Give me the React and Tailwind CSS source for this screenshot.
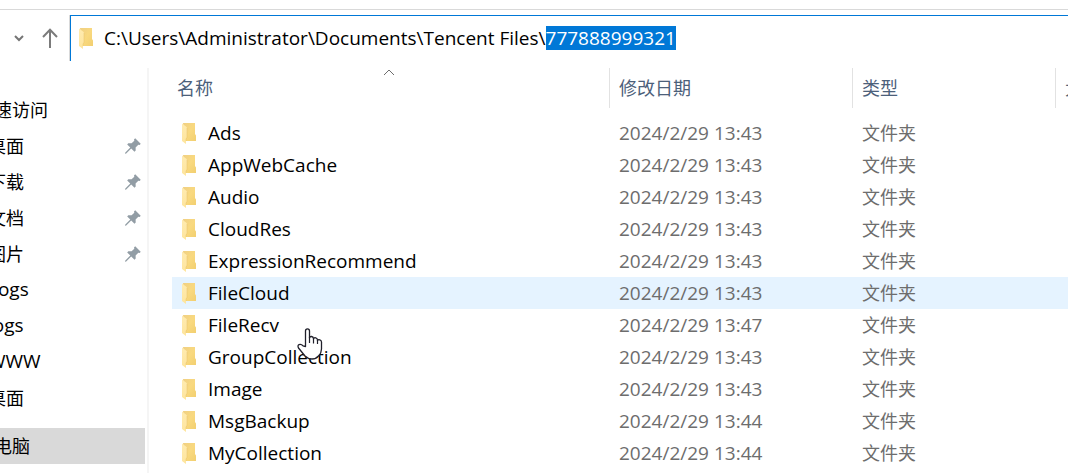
import { useEffect, useRef } from "react";

const PARENT = "C:\\Users\\Administrator\\Documents\\Tencent Files\\";
const CURRENT = "777888999321";

const files = [
  ["Ads", "2024/2/29 13:43"],
  ["AppWebCache", "2024/2/29 13:43"],
  ["Audio", "2024/2/29 13:43"],
  ["CloudRes", "2024/2/29 13:43"],
  ["ExpressionRecommend", "2024/2/29 13:43"],
  ["FileCloud", "2024/2/29 13:43"],
  ["FileRecv", "2024/2/29 13:47"],
  ["GroupCollection", "2024/2/29 13:43"],
  ["Image", "2024/2/29 13:43"],
  ["MsgBackup", "2024/2/29 13:44"],
  ["MyCollection", "2024/2/29 13:44"],
];

const places = [
  { name: "桌面", pinned: true },
  { name: "下载", pinned: true },
  { name: "文档", pinned: true },
  { name: "图片", pinned: true },
  { name: "Logs", latin: true },
  { name: "logs", latin: true },
  { name: "WWW", latin: true },
  { name: "桌面" },
];

function FolderIcon() {
  return (
    <svg className="h-[22px] w-[14px] shrink-0" viewBox="0 -1 14 22" aria-hidden="true">
      <defs>
        <linearGradient id="folder-back" x1="0" y1="0" x2="1" y2="1">
          <stop offset="0" stopColor="#f0d084" />
          <stop offset="0.5" stopColor="#f9d97f" />
          <stop offset="1" stopColor="#f2cf70" />
        </linearGradient>
        <linearGradient id="folder-front" x1="0" y1="0" x2="0" y2="1">
          <stop offset="0" stopColor="#ffebb0" />
          <stop offset="1" stopColor="#fee59d" />
        </linearGradient>
      </defs>
      <path d="M1 0H13V11L14 12.5V18H3Z" fill="url(#folder-back)" />
      <path d="M0 0.5L4 3.5Q5 4 5 5.500V14L4 15.500V21L0 18Z" fill="url(#folder-front)" />
      <path d="M5 5V14.500L4 16V18" fill="none" stroke="#e6c36f" strokeWidth="0.5" />
    </svg>
  );
}

function PinIcon() {
  return (
    <svg className="h-4 w-4 shrink-0" viewBox="0 0 16 16" aria-hidden="true">
      <path
        d="M10.200 0.300L15.700 5.800L14.700 7L13.300 6.800L10.600 9.500L10.700 12.600L9.500 13.700L6.200 10.500L1.200 15.500L0 15.700L0.300 14.500L5.300 9.600L2.200 6.400L3.300 5.200L6.600 5.300L9.300 2.700L9 1.400Z"
        fill="#929da5"
      />
    </svg>
  );
}

function HandPointer() {
  return (
    <svg className="pointer-events-none absolute left-[297px] top-[328px] h-8 w-[26px]" viewBox="0 0 26 32" aria-hidden="true">
      <path
        d="M8.500 18.500V3Q8.500 0.800 10.500 0.800T12.500 3V10Q12.700 8.300 14.500 8.500T16.500 10.500V11Q17 9.300 18.700 9.800T20.500 12V12.500Q21.200 11.300 22.800 11.800T24.500 14V21Q24.500 25 21.500 28Q19 31 15 31Q11 31 8 28L1.500 20Q0.300 17.500 2 16.700Q4 15.800 6 17.800Z"
        fill="#fff"
        stroke="#20202b"
        strokeWidth="1.300"
        strokeLinejoin="round"
      />
      <path d="M12.500 9V15M16.500 10.500V15.500M20.500 12V16" fill="none" stroke="#20202b" strokeWidth="1.200" />
    </svg>
  );
}

export default function App() {
  const address = useRef(null);

  useEffect(() => {
    address.current.focus();
    address.current.setSelectionRange(PARENT.length, PARENT.length + CURRENT.length);
  }, []);

  return (
    <div className="relative flex h-screen flex-col overflow-hidden bg-white font-['Open_Sans','Noto_Sans_CJK_SC',sans-serif] text-lg text-black">
      <div className="h-[10px] shrink-0 border-b border-[#d9d9d9]" />
      <header className="flex h-[51px] shrink-0 pt-[5px]">
        <div className="flex w-[70px] shrink-0 items-center gap-4 border-r border-[#d9d9d9] pl-[14px]">
          <button type="button" aria-label="最近浏览的位置">
            <svg className="h-[10px] w-[10px]" viewBox="0 0 10 10" fill="none" stroke="#757575" strokeWidth="2" aria-hidden="true">
              <path d="M1 3L5 7L9 3" />
            </svg>
          </button>
          <button type="button" aria-label="上移">
            <svg className="h-5 w-5" viewBox="0 0 20 20" fill="none" stroke="#7b7b7b" strokeWidth="2" aria-hidden="true">
              <path d="M10 20V2M3 9L10 1.800L17 9" />
            </svg>
          </button>
        </div>
        <div className="flex flex-1 items-center gap-[11px] border-l border-t border-l-[#0078d7] border-t-[#0078d7] pb-[2px] pl-2">
          <FolderIcon />
          <input
            ref={address}
            type="text"
            aria-label="地址"
            spellCheck={false}
            defaultValue={PARENT + CURRENT}
            className="min-w-0 flex-1 bg-transparent text-[19px] leading-6 outline-none selection:bg-[#0078d7] selection:text-white"
          />
        </div>
      </header>

      <div className="flex min-h-0 flex-1 pt-[7px]">
        <nav aria-label="导航窗格" className="w-[149px] shrink-0 overflow-hidden border-r-2 border-[#f5f5f5] pt-6">
          <div className="-ml-6 mr-[2px]">
            <a href="#quick" className="flex h-9 items-center whitespace-nowrap">快速访问</a>
            <ul>
              {places.map((place, i) => (
                <li key={i}>
                  <a href={"#place-" + i} className="flex h-9 items-center justify-between pl-3 pr-1">
                    <span className={place.latin ? "text-[19px]" : "text-lg"}>{place.name}</span>
                    {place.pinned && <PinIcon />}
                  </a>
                </li>
              ))}
            </ul>
            <a href="#computer" className="mt-3 flex h-9 items-center bg-[#d9d9d9]">此电脑</a>
          </div>
        </nav>

        <main className="min-w-0 flex-1 pl-[23px]">
          <table className="w-full table-fixed border-collapse text-left">
            <colgroup>
              <col />
              <col className="w-[243px]" />
              <col className="w-[203px]" />
              <col className="w-[13px]" />
            </colgroup>
            <thead className="text-[#4c607a]">
              <tr className="h-[49px] align-top">
                <th className="p-0 font-normal" aria-sort="ascending">
                  <div className="relative flex h-10 items-center pl-[5px]">
                    <button type="button">名称</button>
                    <svg className="absolute left-1/2 top-0 h-2 w-4 -translate-x-1/2" viewBox="0 0 16 8" fill="none" stroke="#6d6d6d" aria-hidden="true">
                      <path d="M1 7L6 2L11 7" />
                    </svg>
                  </div>
                </th>
                <th className="p-0 font-normal">
                  <div className="flex h-10 items-center border-l border-[#e2e2e2] pl-[9px]">
                    <button type="button">修改日期</button>
                  </div>
                </th>
                <th className="p-0 font-normal">
                  <div className="flex h-10 items-center border-l border-[#e2e2e2] pl-[9px]">
                    <button type="button">类型</button>
                  </div>
                </th>
                <th className="p-0 font-normal">
                  <div className="flex h-10 items-center overflow-hidden border-l border-[#e2e2e2] pl-[9px]">
                    <button type="button" className="whitespace-nowrap">大小</button>
                  </div>
                </th>
              </tr>
            </thead>
            <tbody>
              {files.map(([name, date]) => (
                <tr key={name} className={name === "FileCloud" ? "h-8 bg-[#e5f3ff]" : "h-8"}>
                  <td className="p-0">
                    <div className="flex items-center gap-3 pl-[10px] text-[19px] leading-8">
                      <FolderIcon />
                      {name}
                    </div>
                  </td>
                  <td className="p-0 pl-[10px] text-[19px] leading-8 text-[#6d6d6d]">{date}</td>
                  <td className="p-0 pl-[10px] leading-8 text-[#6d6d6d]">文件夹</td>
                  <td className="p-0" />
                </tr>
              ))}
            </tbody>
          </table>
        </main>
      </div>
      <HandPointer />
    </div>
  );
}
